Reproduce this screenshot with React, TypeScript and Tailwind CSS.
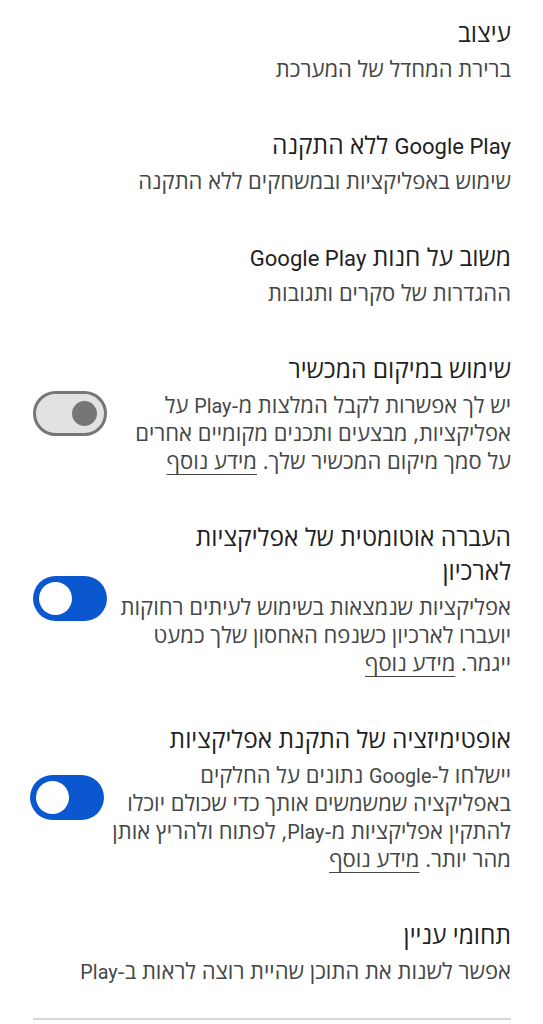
import React from "react"

type Item = {
  title: React.ReactNode
  lines: React.ReactNode[]
  toggle?: "on" | "off"
}

// Latin words are set in Roboto, Hebrew in Open Sans
const L = ({ children }: { children: React.ReactNode }) => (
  <span className="text-[0.9em]" style={{ fontFamily: 'Roboto, "Liberation Sans", sans-serif' }}>
    {children}
  </span>
)

const more = <span className="underline underline-offset-[5px] decoration-1">מידע נוסף</span>

const items: Item[] = [
  { title: "עיצוב", lines: ["ברירת המחדל של המערכת"] },
  { title: <><L>Google Play</L> ללא התקנה</>, lines: ["שימוש באפליקציות ובמשחקים ללא התקנה"] },
  { title: <>משוב על חנות <L>Google Play</L></>, lines: ["ההגדרות של סקרים ותגובות"] },
  {
    title: "שימוש במיקום המכשיר",
    lines: [
      <>יש לך אפשרות לקבל המלצות מ-<L>Play</L> על</>,
      "אפליקציות, מבצעים ותכנים מקומיים אחרים",
      <>על סמך מיקום המכשיר שלך. {more}</>,
    ],
    toggle: "off",
  },
  {
    title: ["העברה אוטומטית של אפליקציות", "לארכיון"],
    lines: [
      "אפליקציות שנמצאות בשימוש לעיתים רחוקות",
      "יועברו לארכיון כשנפח האחסון שלך כמעט",
      <>ייגמר. {more}</>,
    ],
    toggle: "on",
  },
  {
    title: "אופטימיזציה של התקנת אפליקציות",
    lines: [
      <>יישלחו ל-<L>Google</L> נתונים על החלקים</>,
      "באפליקציה שמשמשים אותך כדי שכולם יוכלו",
      <>להתקין אפליקציות מ-<L>Play</L>, לפתוח ולהריץ אותן</>,
      <>מהר יותר. {more}</>,
    ],
    toggle: "on",
  },
  { title: "תחומי עניין", lines: [<>אפשר לשנות את התוכן שהיית רוצה לראות ב-<L>Play</L></>] },
]

// RTL: justify-end puts the thumb on the left (on), justify-start on the right (off)
function Toggle({ state }: { state: "on" | "off" }) {
  if (state === "on") {
    return (
      <div className="w-[74px] h-[45px] shrink-0 rounded-full bg-[#0b57d0] flex items-center justify-end px-[6px]">
        <div className="w-[33px] h-[33px] rounded-full bg-white" />
      </div>
    )
  }
  return (
    <div className="w-[74px] h-[45px] shrink-0 rounded-full bg-[#e1e3e1] border-[3px] border-[#747775] flex items-center justify-start px-[7px]">
      <div className="w-[25px] h-[25px] rounded-full bg-[#747775]" />
    </div>
  )
}

export default function App() {
  return (
    <div
      dir="rtl"
      className="w-[543px] min-h-[1024px] bg-white pt-[16px] pr-[32px] pl-[33px]"
      style={{ fontFamily: '"Open Sans", "Liberation Sans", sans-serif' }}
    >
      <div className="flex flex-col gap-[46px]">
        {items.map((item, i) => {
          const titleLines = Array.isArray(item.title) ? item.title : [item.title]
          return (
            <div key={i} className="flex items-center justify-between gap-[8px]">
              <div className="flex flex-col">
                {titleLines.map((t, j) => (
                  <div key={j} className="h-[34px] text-[24.5px] leading-[34px] text-[#1f1f1f] whitespace-nowrap">
                    {t}
                  </div>
                ))}
                <div className="mt-[4px] text-[22px] leading-[28px] text-[#444746] whitespace-nowrap">
                  {item.lines.map((l, j) => (
                    <div key={j} className="h-[28px]">
                      {l}
                    </div>
                  ))}
                </div>
              </div>
              {item.toggle && <Toggle state={item.toggle} />}
            </div>
          )
        })}
      </div>
      <div className="mt-[34px] h-[2px] bg-[#d6d6d6]" />
    </div>
  )
}
